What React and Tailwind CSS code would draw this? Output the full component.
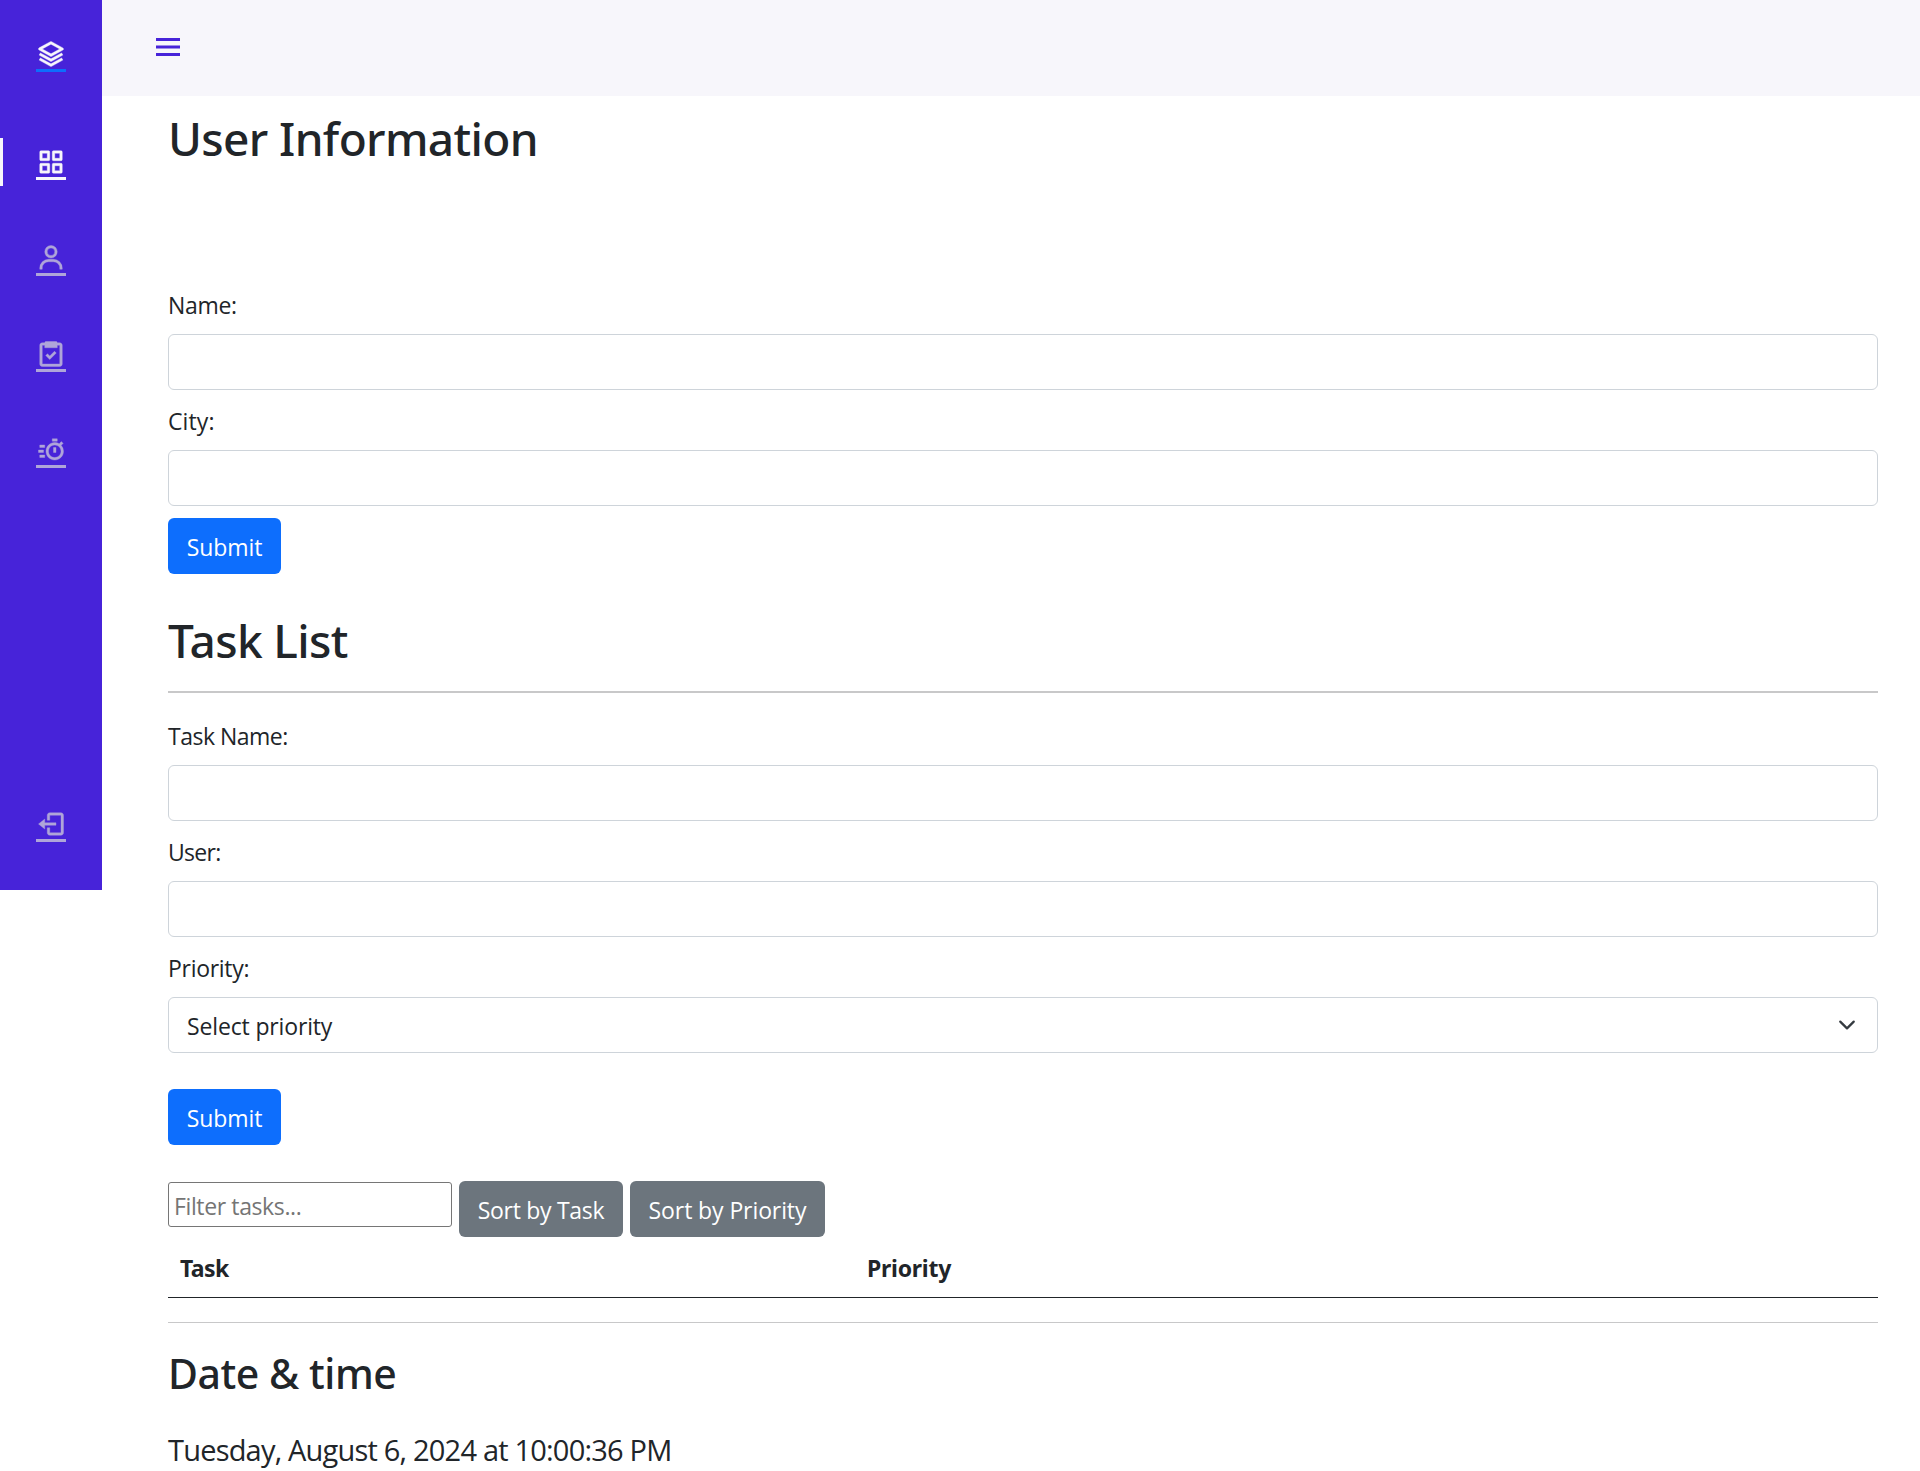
import { BiLayer, BiGridAlt, BiUser, BiTask, BiTimer, BiLogOut, BiMenu } from 'react-icons/bi';

function NavIcon({ icon: Icon, className = '' }) {
  return (
    <a className={`flex h-12 w-full items-center justify-center pt-[3px] ${className}`}>
      <span className="border-b-[3px] border-current">
        <Icon className="block size-[30px] stroke-[0.3]" />
      </span>
    </a>
  );
}

function Sidebar() {
  return (
    <nav className="flex h-[890px] w-[102px] shrink-0 flex-col bg-[#4723D9] pt-[30px] text-[#AFA5D9]">
      <a className="flex h-12 items-center justify-center pt-[3px] text-[#F7F6FB]">
        <span className="border-b-[3px] border-[#0d6efd]">
          <BiLayer className="block size-[30px] stroke-[0.3]" />
        </span>
      </a>
      <div className="mt-[60px] flex flex-col gap-12">
        <NavIcon icon={BiGridAlt} className="border-l-[3px] border-[#F7F6FB] pr-[3px] text-[#F7F6FB]" />
        <NavIcon icon={BiUser} />
        <NavIcon icon={BiTask} />
        <NavIcon icon={BiTimer} />
      </div>
      <NavIcon icon={BiLogOut} className="mt-auto mb-[42px]" />
    </nav>
  );
}

function Field({ id, label, tracking, className = '', children }) {
  return (
    <div className={className}>
      <label htmlFor={id} className={`block h-9 leading-9 ${tracking}`}>
        {label}
      </label>
      <div className="mt-[11px] h-14 rounded-[6px] border border-[#ced4da]">
        {children || <input id={id} className="block size-full px-[18px] outline-none" />}
      </div>
    </div>
  );
}

function Button({ className, children }) {
  return (
    <button type="button" className={`flex h-14 items-center justify-center rounded-[6px] pt-[2px] text-white ${className}`}>
      {children}
    </button>
  );
}

export default function App() {
  return (
    <div className="flex h-[1471px] w-full items-start overflow-hidden bg-white font-['Open_Sans',sans-serif] text-[23px] text-[#212529]">
      <Sidebar />
      <div className="min-w-0 flex-1">
        <header className="flex h-24 items-center bg-[#F7F6FB] pb-[2px] pl-12 text-[#4723D9]">
          <BiMenu className="size-9" />
        </header>
        <main className="pt-[13px] pr-[42px] pl-[66px]">
          <h1 className="h-[58px] font-['Noto_Sans',sans-serif] text-[46px] leading-[58px] font-medium tracking-[-0.63px]">
            User Information
          </h1>

          <form className="mt-[120px]">
            <Field id="name" label="Name:" tracking="tracking-[-0.3px]" />
            <Field id="city" label="City:" tracking="tracking-[0.1px]" className="mt-[13px]" />
            <Button className="mt-3 w-[113px] bg-[#0d6efd]">
              <span className="tracking-[-0.1px]">Submit</span>
            </Button>
          </form>

          <h1 className="mt-[37px] h-[58px] font-['Noto_Sans',sans-serif] text-[46px] leading-[58px] font-medium tracking-[-0.65px]">
            Task List
          </h1>
          <hr className="mt-[22px] h-[2px] border-0 bg-[#c8c8c9]" />

          <form className="mt-[25px]">
            <Field id="task" label="Task Name:" tracking="tracking-[-0.5px]" />
            <Field id="user" label="User:" tracking="tracking-[-0.7px]" className="mt-[13px]" />
            <Field id="priority" label="Priority:" tracking="tracking-[-0.3px]" className="mt-[13px]">
              <div id="priority" className="flex h-full items-center justify-between px-[18px]">
                <span className="pt-[3px] tracking-[-0.15px]">Select priority</span>
                <svg viewBox="0 0 16 16" className="h-[18px] w-6" fill="none">
                  <path
                    d="m2 5 6 6 6-6"
                    stroke="#343a40"
                    strokeWidth="2"
                    strokeLinecap="round"
                    strokeLinejoin="round"
                  />
                </svg>
              </div>
            </Field>
            <Button className="mt-9 w-[113px] bg-[#0d6efd]">
              <span className="tracking-[-0.1px]">Submit</span>
            </Button>
          </form>

          <div className="mt-9 flex items-start">
            <input
              placeholder="Filter tasks..."
              className="mt-px h-[45px] w-[284px] rounded-[3px] border border-[#767676] pt-[3px] pl-[5px] tracking-[-0.38px] outline-none placeholder:text-[#757575]"
            />
            <Button className="ml-[7px] w-[164px] bg-[#6c757d]">
              <span className="tracking-[-0.3px]">Sort by Task</span>
            </Button>
            <Button className="ml-[7px] w-[195px] bg-[#6c757d]">
              <span className="tracking-[-0.1px]">Sort by Priority</span>
            </Button>
          </div>

          <div className="mt-[13px] grid h-12 grid-cols-[687px_1fr] border-b border-[#212529] font-['Noto_Sans',sans-serif] leading-9 font-bold">
            <div className="pl-3 tracking-[-0.6px]">Task</div>
            <div className="pl-3 tracking-[-0.25px]">Priority</div>
          </div>
          <hr className="mt-6 h-px border-0 bg-[#c8c8c9]" />

          <h2 className="mt-[25px] h-[50px] font-['Noto_Sans',sans-serif] text-[41px] leading-[50px] font-medium tracking-[-0.45px]">
            Date &amp; time
          </h2>
          <p className="mt-8 h-10 text-[29px] leading-10 tracking-[-0.8px]">
            Tuesday, August 6, 2024 at 10:00:36 PM
          </p>
        </main>
      </div>
    </div>
  );
}
